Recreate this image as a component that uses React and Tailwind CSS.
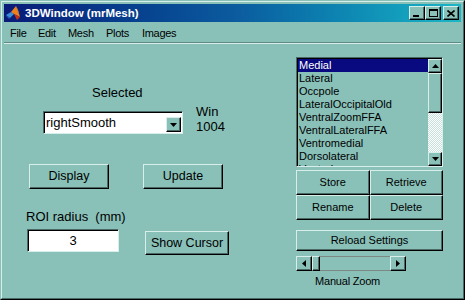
import React from "react";

const raised =
  "border border-t-[#d8eeea] border-l-[#d8eeea] border-r-black border-b-black shadow-[inset_-1px_-1px_0_#4b6966] bg-[#89c1b8]";
const sunken =
  "border border-t-[#4b6966] border-l-[#4b6966] border-r-[#d8eeea] border-b-[#d8eeea] shadow-[inset_1px_1px_0_#000]";

function Btn({ className, children }) {
  return (
    <div className={`${raised} flex items-center justify-center ${className}`}>
      {children}
    </div>
  );
}

function Tri({ dir }) {
  // small black arrow glyph
  const pts = {
    up: "0,4 3.5,0 7,4",
    down: "0,0 3.5,4 7,0",
    left: "4,0 0,3.5 4,7",
    right: "0,0 4,3.5 0,7",
  }[dir];
  const vertical = dir === "up" || dir === "down";
  return (
    <svg width={vertical ? 7 : 4} height={vertical ? 4 : 7}>
      <polygon points={pts} fill="#000" />
    </svg>
  );
}

function MatlabIcon() {
  return (
    <svg width="16" height="16" viewBox="0 0 16 16">
      <polygon points="1,10 6,7 9,9 5,13" fill="#3a8ed8" />
      <polygon points="0,10 5,13 4,14" fill="#1f5fb0" />
      <polygon points="6,7 11,1 15,12 9,9" fill="#f0801c" />
      <polygon points="11,1 13,5 15,12" fill="#ffb040" />
      <polygon points="9,9 15,12 12,15" fill="#c83010" />
    </svg>
  );
}

const regions = [
  "Medial",
  "Lateral",
  "Occpole",
  "LateralOccipitalOld",
  "VentralZoomFFA",
  "VentralLateralFFA",
  "Ventromedial",
  "Dorsolateral",
  "Ventral",
];

export default function App() {
  return (
    <div className="w-[465px] h-[300px] overflow-hidden bg-[#89c1b8] text-black font-['Liberation_Sans',Arial,sans-serif] border border-t-[#89c1b8] border-l-[#89c1b8] border-r-black border-b-black">
      <div className="h-full flex flex-col p-[2px] border border-t-[#d8eeea] border-l-[#d8eeea] border-r-[#4b6966] border-b-[#4b6966]">
        {/* title bar */}
        <div className="h-[18px] shrink-0 flex items-center pl-[1px] pr-[2px] bg-gradient-to-r from-[#0a1a78] via-[#0c5a9e] to-[#1cb6c6]">
          <MatlabIcon />
          <span className="ml-[4px] text-white font-bold text-[11.5px] leading-[14px]">3DWindow (mrMesh)</span>
          <div className="ml-auto flex">
            <Btn className="w-[16px] h-[14px] items-end justify-start pl-[3px] pb-[2px]">
              <div className="w-[6px] h-[2px] bg-black" />
            </Btn>
            <Btn className="w-[16px] h-[14px]">
              <div className="w-[9px] h-[8px] border border-black border-t-2" />
            </Btn>
            <Btn className="w-[16px] h-[14px] ml-[2px]">
              <svg width="8" height="7" viewBox="0 0 8 7">
                <path d="M0.5 0.5 L7.5 6.5 M7.5 0.5 L0.5 6.5" stroke="#000" strokeWidth="1.6" />
              </svg>
            </Btn>
          </div>
        </div>

        {/* menu bar */}
        <div className="h-[20px] shrink-0 flex pl-[6px] pt-[5px] text-[11px] leading-[13px] tracking-[-0.3px]">
          <span className="w-[28px]">File</span>
          <span className="w-[30px]">Edit</span>
          <span className="w-[38px]">Mesh</span>
          <span className="w-[36px]">Plots</span>
          <span>Images</span>
        </div>
        <div className="h-[2px] shrink-0 border-t border-t-[#5f8a84] border-b border-b-[#d8eeea]" />

        {/* body */}
        <div className="flex flex-1">
          {/* left column */}
          <div className="w-[292px] flex flex-col text-[13px] leading-[15px]">
            <div className="mt-[41px] ml-[88px]">Selected</div>
            <div className="mt-[4px] flex items-start">
              <div className={`${sunken} mt-[7px] ml-[39px] w-[140px] h-[23px] bg-white flex items-end pl-[2px] pr-[1px] pb-[1px]`}>
                <span className="flex-1 self-center">rightSmooth</span>
                <Btn className="w-[15px] h-[15px]">
                  <Tri dir="down" />
                </Btn>
              </div>
              <div className="ml-[13px] flex flex-col">
                <span>Win</span>
                <span>1004</span>
              </div>
            </div>
            <div className="mt-[30px] flex text-[12.5px]">
              <Btn className="ml-[25px] w-[80px] h-[25px]">Display</Btn>
              <Btn className="ml-[34px] w-[80px] h-[25px]">Update</Btn>
            </div>
            <div className="mt-[20px] ml-[22px] whitespace-pre">ROI radius  (mm)</div>
            <div className="mt-[5px] flex items-start">
              <div className={`${sunken} ml-[23px] w-[92px] h-[23px] bg-white flex items-center justify-center`}>3</div>
              <Btn className="ml-[26px] mt-[2px] w-[84px] h-[24px] text-[12.5px]">Show Cursor</Btn>
            </div>
          </div>

          {/* right column */}
          <div className="w-[147px] flex flex-col text-[11px] leading-[13px]">
            <div className={`${sunken} mt-[13px] h-[110px] flex pt-[1px] pl-[1px]`}>
              <div className="flex-1 overflow-hidden">
                {regions.map((r, i) => (
                  <div
                    key={r}
                    className={
                      i === 0
                        ? "h-[13px] pl-[1px] bg-[#0a0a80] text-white"
                        : "h-[13px] pl-[1px]"
                    }
                  >
                    {r}
                  </div>
                ))}
              </div>
              <div className="w-[14px] flex flex-col">
                <Btn className="h-[14px]">
                  <Tri dir="up" />
                </Btn>
                <div className={`${raised} h-[40px]`} />
                <div className="flex-1 bg-[repeating-conic-gradient(#ffffff_0_25%,#c4e2dc_0_50%)] bg-[length:2px_2px]" />
                <Btn className="h-[14px]">
                  <Tri dir="down" />
                </Btn>
              </div>
            </div>
            <div className="mt-[3px] grid grid-cols-2">
              <Btn className="h-[25px]">Store</Btn>
              <Btn className="h-[25px]">Retrieve</Btn>
              <Btn className="h-[25px]">Rename</Btn>
              <Btn className="h-[25px]">Delete</Btn>
            </div>
            <Btn className="mt-[10px] h-[21px]">Reload Settings</Btn>
            <div className="mt-[5px] w-[110px] h-[15px] flex">
              <Btn className="w-[16px] h-[15px]">
                <Tri dir="left" />
              </Btn>
              <div className={`${raised} w-[8px] h-[15px]`} />
              <div className="flex-1 border-t border-b border-[#7c8884]" />
              <Btn className="w-[16px] h-[15px]">
                <Tri dir="right" />
              </Btn>
            </div>
            <div className="mt-[4px] ml-[19px] tracking-[-0.2px]">Manual Zoom</div>
          </div>
        </div>
      </div>
    </div>
  );
}
